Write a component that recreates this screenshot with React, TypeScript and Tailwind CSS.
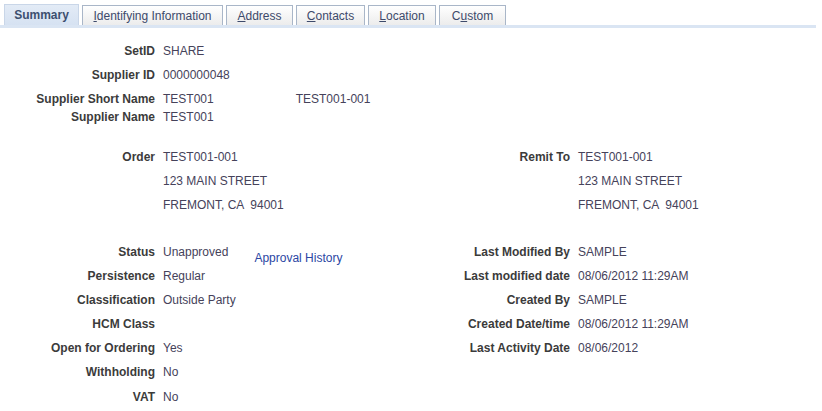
import React from 'react';

const font = "font-['Liberation_Sans',Arial,sans-serif]";

const tabs = [
  { pre: '', key: 'I', post: 'dentifying Information', w: 'w-[141px]' },
  { pre: '', key: 'A', post: 'ddress', w: 'w-[67px]' },
  { pre: '', key: 'C', post: 'ontacts', w: 'w-[69px]' },
  { pre: '', key: 'L', post: 'ocation', w: 'w-[68px]' },
  { pre: 'C', key: 'u', post: 'stom', w: 'w-[67px]' },
];

const Label: React.FC<{ children?: React.ReactNode; w?: string }> = ({ children, w = 'w-[155px]' }) => (
  <span className={`${w} shrink-0 text-right font-bold text-[#3b3b3b]`}>{children}</span>
);

const Value: React.FC<{ children?: React.ReactNode }> = ({ children }) => (
  <span className="whitespace-pre pl-[8px] text-[#45425a]">{children}</span>
);

type Pair = [string, string];

const Row: React.FC<{ left?: Pair; right?: Pair; extra?: React.ReactNode; h?: string }> = ({ left, right, extra, h = 'h-[24px]' }) => (
  <div className={`flex ${h} items-center`}>
    <div className="flex w-[416px] shrink-0 items-center">
      <Label>{left?.[0]}</Label>
      <Value>{left?.[1]}</Value>
      {extra}
    </div>
    {right && (
      <div className="flex items-center">
        <Label w="w-[154px]">{right[0]}</Label>
        <Value>{right[1]}</Value>
      </div>
    )}
  </div>
);

export default function App() {
  return (
    <div className={`${font} h-[411px] w-[822px] bg-white text-[12px] leading-[14px]`}>
      {/* tab strip */}
      <div className="mr-[6px] flex items-end gap-[3px] border-b-[3px] border-[#dae5f3] pl-[4px] pt-[4px]">
        <div className="flex h-[21px] w-[75px] items-center justify-center border border-b-0 border-[#c9d6e8] bg-gradient-to-b from-[#e3ebf6] to-[#d6e2f2] font-bold text-[#3c4f6f]">
          Summary
        </div>
        {tabs.map((t) => (
          <div
            key={t.post}
            className={`${t.w} flex h-[20px] items-center justify-center border border-b-0 border-[#a9b6c8] bg-gradient-to-b from-white to-[#ececec] text-[#3d4a6b]`}
          >
            {t.pre}
            <span className="underline">{t.key}</span>
            {t.post}
          </div>
        ))}
      </div>

      <div className="pt-[11px]">
        <Row left={['SetID', 'SHARE']} />
        <Row left={['Supplier ID', '0000000048']} />
        <div className="mt-[3px]">
          <Row
            h="h-[18px]"
            left={['Supplier Short Name', 'TEST001']}
            extra={<span className="ml-[82px] text-[#45425a]">TEST001-001</span>}
          />
          <Row h="h-[18px]" left={['Supplier Name', 'TEST001']} />
        </div>

        <div className="mt-[19px]">
          <Row left={['Order', 'TEST001-001']} right={['Remit To', 'TEST001-001']} />
          <Row left={['', '123 MAIN STREET']} right={['', '123 MAIN STREET']} />
          <Row left={['', 'FREMONT, CA  94001']} right={['', 'FREMONT, CA  94001']} />
        </div>

        <div className="mt-[23px]">
          <Row
            left={['Status', 'Unapproved']}
            right={['Last Modified By', 'SAMPLE']}
            extra={<span className="ml-[26px] mt-[12px] text-[#2b46a3]">Approval History</span>}
          />
          <Row left={['Persistence', 'Regular']} right={['Last modified date', '08/06/2012 11:29AM']} />
          <Row left={['Classification', 'Outside Party']} right={['Created By', 'SAMPLE']} />
          <Row left={['HCM Class', '']} right={['Created Date/time', '08/06/2012 11:29AM']} />
          <Row left={['Open for Ordering', 'Yes']} right={['Last Activity Date', '08/06/2012']} />
          <Row left={['Withholding', 'No']} />
          <div className="mt-[1px]">
            <Row left={['VAT', 'No']} />
          </div>
        </div>
      </div>
    </div>
  );
}
